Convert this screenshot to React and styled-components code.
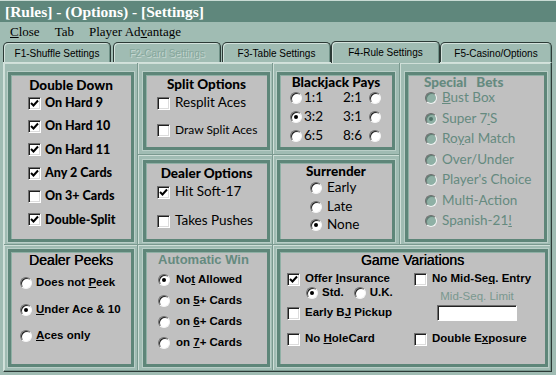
import React from "react";
import styled, { createGlobalStyle, css } from "styled-components";

const TEAL = "#a0bcb3";
const DARK_TEAL = "#5e8679";
const TITLE_TEAL = "#5f877c";
const DIS = "#658a7f";
const PANEL = "#c0c0c0";

const Global = createGlobalStyle`
  html, body { margin: 0; padding: 0; background: ${TEAL}; }
  body { width: 556px; height: 375px; overflow: hidden; }
  * { box-sizing: border-box; }
`;

const Window = styled.div`
  width: 556px;
  height: 375px;
  background: ${TEAL};
  display: flex;
  flex-direction: column;
`;

const TitleBar = styled.div`
  height: 22px;
  background: ${TITLE_TEAL};
  border-top: 1px solid #c9dbd4;
  color: #fff;
  font-family: "Liberation Serif", serif;
  font-weight: bold;
  font-size: 15.5px;
  line-height: 21px;
  padding-left: 5px;
  white-space: nowrap;
`;

const MenuBar = styled.div`
  height: 18px;
  display: flex;
  gap: 15px;
  padding-left: 10px;
  font-family: "Liberation Serif", serif;
  font-size: 13px;
  line-height: 20px;
  color: #000;
`;

const U = styled.span`
  text-decoration: underline;
  text-underline-offset: 1px;
`;

const TabStrip = styled.div`
  height: 22px;
  display: flex;
  align-items: flex-end;
  padding-left: 3px;
  position: relative;
  z-index: 1;
`;

const Tab = styled.div`
  width: ${(p) => p.$w}px;
  margin-right: ${(p) => p.$mr}px;
  height: ${(p) => (p.$active ? 22 : 20)}px;
  margin-bottom: ${(p) => (p.$active ? -1 : 0)}px;
  background: ${TEAL};
  border: 1px solid #2c3a36;
  border-bottom: none;
  border-radius: 5px 5px 0 0;
  box-shadow: inset 1px 1px 0 #d3e2dc, inset -1px 0 0 #6f9187;
  font-family: "Liberation Sans", Arial, sans-serif;
  font-size: 10px;
  line-height: 21px;
  text-align: center;
  color: ${(p) => (p.$disabled ? "#86a79c" : "#000")};
  white-space: nowrap;
  ${(p) =>
    p.$disabled &&
    css`
      text-shadow: 1px 1px 0 #c6d7d1;
    `}
`;

const Content = styled.div`
  margin-left: 3px;
  width: 549px;
  height: 310px;
  display: grid;
  grid-template-columns: 134px 135px 127px 1fr;
  grid-template-rows: 182px 1fr;
  border-top: 1px solid #d3e2dc;
  border-left: 1px solid #d3e2dc;
  border-right: 1px solid #2c3a36;
  border-bottom: 1px solid #2c3a36;
`;

const Cell = styled.div`
  grid-column: ${(p) => p.$col};
  grid-row: ${(p) => p.$row};
  padding: ${(p) => p.$pad};
  box-shadow: inset -1px -1px 0 #7a998f, inset 1px 1px 0 #cfdfd8;
  display: flex;
  flex-direction: column;
`;

const Stack = styled.div`
  grid-column: ${(p) => p.$col};
  grid-row: ${(p) => p.$row};
  display: grid;
  grid-template-rows: 92px 1fr;
`;

const Panel = styled.div`
  flex: 1;
  background: ${PANEL};
  border: 3px solid ${DARK_TEAL};
  box-shadow: inset 1px 1px 0 #8fb0a5, 0 0 0 1px #b9cec7;
  display: flex;
  flex-direction: column;
`;

const comicFamily = `Lato, "DejaVu Sans", sans-serif`;
const sansFamily = `"Liberation Sans", Arial, sans-serif`;

const titleFonts = {
  comic: css`
    font-family: ${comicFamily};
    font-weight: 900;
    font-size: 13.5px;
    color: #000;
  `,
  comicTeal: css`
    font-family: ${comicFamily};
    font-weight: 900;
    font-size: 13.5px;
    color: ${DIS};
  `,
  sans: css`
    font-family: ${sansFamily};
    font-size: 14px;
    color: #000;
    text-shadow: 0.3px 0 0 #000;
  `,
  sansTeal: css`
    font-family: ${sansFamily};
    font-weight: bold;
    font-size: 13px;
    color: ${DIS};
  `,
};

const PanelTitle = styled.div`
  ${(p) => titleFonts[p.$font]}
  line-height: ${(p) => p.$lh || 16}px;
  height: ${(p) => p.$lh || 16}px;
  margin-top: ${(p) => p.$mt || 0}px;
  text-align: ${(p) => p.$align || "center"};
  padding-left: ${(p) => p.$pl || 0}px;
  white-space: pre;
`;

const List = styled.div`
  display: flex;
  flex-direction: column;
  gap: ${(p) => p.$gap}px;
  margin-top: ${(p) => p.$mt || 0}px;
  padding-left: ${(p) => p.$pl || 0}px;
`;

const labelFonts = {
  comicBold: css`
    font-family: ${comicFamily};
    font-weight: 900;
    font-size: 12.5px;
    color: #000;
  `,
  comic: css`
    font-family: ${comicFamily};
    font-size: 13.5px;
    color: #000;
  `,
  comicSmall: css`
    font-family: ${comicFamily};
    font-size: 12px;
    color: #000;
  `,
  comicTeal: css`
    font-family: ${comicFamily};
    font-size: 13.5px;
    color: ${DIS};
  `,
  sans: css`
    font-family: ${sansFamily};
    font-weight: bold;
    font-size: 11.5px;
    color: #000;
  `,
};

const Option = styled.div`
  display: flex;
  align-items: center;
  gap: ${(p) => p.$gap ?? 5}px;
  height: ${(p) => p.$h || 18}px;
  margin-top: ${(p) => p.$mt || 0}px;
  padding-left: ${(p) => p.$pl || 0}px;
  white-space: nowrap;
`;

const Label = styled.span`
  ${(p) => labelFonts[p.$font]}
  line-height: 1;
  margin-right: ${(p) => p.$mr || 0}px;
`;

const CheckBox = styled.span`
  flex: none;
  width: 13px;
  height: 13px;
  background: #fff;
  border: 1px solid;
  border-color: #707070 #fff #fff #707070;
  box-shadow: inset 1px 1px 0 #1e1e1e, inset -1px -1px 0 #dcdcdc;
  display: flex;
  align-items: center;
  justify-content: center;
`;

const RadioBox = styled.span`
  flex: none;
  width: 12px;
  height: 12px;
  border-radius: 50%;
  background: ${(p) => (p.$teal ? "#8fb0a5" : "#fff")};
  border: 1px solid;
  border-color: #6e6e6e #f4f4f4 #f4f4f4 #6e6e6e;
  box-shadow: inset 1px 1px 0 ${(p) => (p.$teal ? "#5f7f75" : "#222")};
  display: flex;
  align-items: center;
  justify-content: center;
`;

const Dot = styled.span`
  width: 4px;
  height: 4px;
  border-radius: 50%;
  background: ${(p) => (p.$teal ? "#4f7368" : "#000")};
`;

const Check = ({ on }) => (
  <CheckBox>
    {on && (
      <svg width="9" height="9" viewBox="0 0 9 9">
        <polyline points="1,4 3.5,6.5 8,1.5" fill="none" stroke="#000" strokeWidth="2" />
      </svg>
    )}
  </CheckBox>
);

const Radio = ({ on, teal }) => (
  <RadioBox $teal={teal}>{on && <Dot $teal={teal} />}</RadioBox>
);

const BJRow = styled.div`
  display: grid;
  grid-template-columns: 12px 39px 28px 12px;
  align-items: center;
  height: 14px;
  padding-left: 10px;
  white-space: nowrap;
`;

const BJLabel = styled.span`
  font-family: ${comicFamily};
  font-size: 13.5px;
  line-height: 1;
  padding-left: 2px;
`;

const GVBody = styled.div`
  display: flex;
  margin-top: 4px;
  padding-left: 7px;
`;

const GVCol = styled.div`
  width: ${(p) => (p.$w ? `${p.$w}px` : "auto")};
  display: flex;
  flex-direction: column;
`;

const LimitBox = styled.div`
  margin-left: 23px;
  width: 80px;
  display: flex;
  flex-direction: column;
  align-items: center;
`;

const LimitText = styled.div`
  font-family: ${sansFamily};
  font-size: 11.5px;
  color: #7a988f;
  line-height: 14px;
  margin-top: 3px;
  white-space: nowrap;
`;

const LimitInput = styled.div`
  width: 80px;
  height: 16px;
  margin-top: 2px;
  background: #fff;
  border: 1px solid;
  border-color: #6e6e6e #fff #fff #6e6e6e;
  box-shadow: inset 1px 1px 0 #222;
`;

export default function App() {
  return (
    <>
      <Global />
      <Window>
        <TitleBar>[Rules] - (Options) - [Settings]</TitleBar>
        <MenuBar>
          <span>
            <U>C</U>lose
          </span>
          <span>Tab</span>
          <span>
            Player Ad<U>v</U>antage
          </span>
        </MenuBar>
        <TabStrip>
          <Tab $w={108} $mr={2}>F1-Shuffle Settings</Tab>
          <Tab $w={108} $mr={1} $disabled>F2-Card Settings</Tab>
          <Tab $w={109} $mr={0}>F3-Table Settings</Tab>
          <Tab $w={109} $mr={0} $active>F4-Rule Settings</Tab>
          <Tab $w={112} $mr={0}>F5-Casino/Options</Tab>
        </TabStrip>
        <Content>
          <Cell $col="1" $row="1" $pad="9px 4px 3px 4px">
            <Panel>
              <PanelTitle $font="comic" $mt={2}>Double Down</PanelTitle>
              <List $gap={5.4} $mt={1} $pl={17}>
                <Option $gap={4}><Check on /><Label $font="comicBold">On Hard 9</Label></Option>
                <Option $gap={4}><Check on /><Label $font="comicBold">On Hard 10</Label></Option>
                <Option $gap={4}><Check on /><Label $font="comicBold">On Hard 11</Label></Option>
                <Option $gap={4}><Check on /><Label $font="comicBold">Any 2 Cards</Label></Option>
                <Option $gap={4}><Check /><Label $font="comicBold">On 3+ Cards</Label></Option>
                <Option $gap={4}><Check on /><Label $font="comicBold">Double-Split</Label></Option>
              </List>
            </Panel>
          </Cell>

          <Stack $col="2" $row="1">
            <Cell $pad="9px 3px 5px 5px">
              <Panel>
                <PanelTitle $font="comic" $mt={1}>Split Options</PanelTitle>
                <List $gap={9} $mt={2} $pl={11}>
                  <Option><Check /><Label $font="comic">Resplit Aces</Label></Option>
                  <Option><Check /><Label $font="comicSmall">Draw Split Aces</Label></Option>
                </List>
              </Panel>
            </Cell>
            <Cell $pad="5px 3px 3px 5px">
              <Panel>
                <PanelTitle $font="comic" $mt={2}>Dealer Options</PanelTitle>
                <List $gap={11} $mt={2} $pl={11}>
                  <Option><Check on /><Label $font="comic">Hit Soft-17</Label></Option>
                  <Option><Check /><Label $font="comic">Takes Pushes</Label></Option>
                </List>
              </Panel>
            </Cell>
          </Stack>

          <Stack $col="3" $row="1">
            <Cell $pad="9px 5px 5px 4px">
              <Panel>
                <PanelTitle $font="comic" $mt={0} $lh={14}>Blackjack Pays</PanelTitle>
                <List $gap={5} $mt={2}>
                  <BJRow><Radio /><BJLabel>1:1</BJLabel><BJLabel>2:1</BJLabel><Radio /></BJRow>
                  <BJRow><Radio on /><BJLabel>3:2</BJLabel><BJLabel>3:1</BJLabel><Radio /></BJRow>
                  <BJRow><Radio /><BJLabel>6:5</BJLabel><BJLabel>8:6</BJLabel><Radio /></BJRow>
                </List>
              </Panel>
            </Cell>
            <Cell $pad="5px 5px 3px 4px">
              <Panel>
                <PanelTitle $font="comic" $mt={1} $lh={15}>Surrender</PanelTitle>
                <List $gap={2.5} $mt={1} $pl={30}>
                  <Option $h={16}><Radio /><Label $font="comic">Early</Label></Option>
                  <Option $h={16}><Radio /><Label $font="comic">Late</Label></Option>
                  <Option $h={16}><Radio on /><Label $font="comic">None</Label></Option>
                </List>
              </Panel>
            </Cell>
          </Stack>

          <Cell $col="4" $row="1" $pad="9px 4px 3px 5px">
            <Panel>
              <PanelTitle $font="comicTeal" $mt={0} $lh={14} $align="left" $pl={16}>
                {"Special   Bets"}
              </PanelTitle>
              <List $gap={6.5} $mt={2} $pl={17}>
                <Option $h={14}><Radio teal /><Label $font="comicTeal"><U>B</U>ust Box</Label></Option>
                <Option $h={14}><Radio teal on /><Label $font="comicTeal">Super 7<U>'</U>S</Label></Option>
                <Option $h={14}><Radio teal /><Label $font="comicTeal">Ro<U>y</U>al Match</Label></Option>
                <Option $h={14}><Radio teal /><Label $font="comicTeal">Over/Under</Label></Option>
                <Option $h={14}><Radio teal /><Label $font="comicTeal">Player's Choice</Label></Option>
                <Option $h={14}><Radio teal /><Label $font="comicTeal">Multi-Action</Label></Option>
                <Option $h={14}><Radio teal /><Label $font="comicTeal">Spanish-21<U>!</U></Label></Option>
              </List>
            </Panel>
          </Cell>

          <Cell $col="1" $row="2" $pad="4px 4px 4px 4px">
            <Panel>
              <PanelTitle $font="sans">Dealer Peeks</PanelTitle>
              <List $gap={10.5} $mt={7} $pl={9}>
                <Option $h={16} $gap={4}><Radio /><Label $font="sans">Does not <U>P</U>eek</Label></Option>
                <Option $h={16} $gap={4}><Radio on /><Label $font="sans"><U>U</U>nder Ace &amp; 10</Label></Option>
                <Option $h={16} $gap={4}><Radio /><Label $font="sans"><U>A</U>ces only</Label></Option>
              </List>
            </Panel>
          </Cell>

          <Cell $col="2" $row="2" $pad="4px 3px 4px 5px">
            <Panel>
              <PanelTitle $font="sansTeal" $align="left" $pl={12}>Automatic Win</PanelTitle>
              <List $gap={4.9} $mt={4} $pl={12}>
                <Option $h={16} $gap={6}><Radio on /><Label $font="sans">No<U>t</U> Allowed</Label></Option>
                <Option $h={16} $gap={6}><Radio /><Label $font="sans">on <U>5</U>+ Cards</Label></Option>
                <Option $h={16} $gap={6}><Radio /><Label $font="sans">on <U>6</U>+ Cards</Label></Option>
                <Option $h={16} $gap={6}><Radio /><Label $font="sans">on <U>7</U>+ Cards</Label></Option>
              </List>
            </Panel>
          </Cell>

          <Cell $col="3 / span 2" $row="2" $pad="4px 3px 4px 4px">
            <Panel>
              <PanelTitle $font="sans">Game Variations</PanelTitle>
              <GVBody>
                <GVCol $w={127}>
                  <Option $h={14}><Check on /><Label $font="sans">Offer <U>I</U>nsurance</Label></Option>
                  <Option $h={14} $pl={19} $gap={4}>
                    <Radio on /><Label $font="sans" $mr={6}>Std.</Label>
                    <Radio /><Label $font="sans">U.K.</Label>
                  </Option>
                  <Option $h={14} $mt={6}><Check /><Label $font="sans">Early B<U>J</U> Pickup</Label></Option>
                  <Option $h={14} $mt={12}><Check /><Label $font="sans">No <U>H</U>oleCard</Label></Option>
                </GVCol>
                <GVCol>
                  <Option $h={14}><Check /><Label $font="sans">No Mid-Se<U>q</U>. Entry</Label></Option>
                  <LimitBox>
                    <LimitText>Mid-Seq. Limit</LimitText>
                    <LimitInput />
                  </LimitBox>
                  <Option $h={14} $mt={11}><Check /><Label $font="sans">Double E<U>x</U>posure</Label></Option>
                </GVCol>
              </GVBody>
            </Panel>
          </Cell>
        </Content>
      </Window>
    </>
  );
}
